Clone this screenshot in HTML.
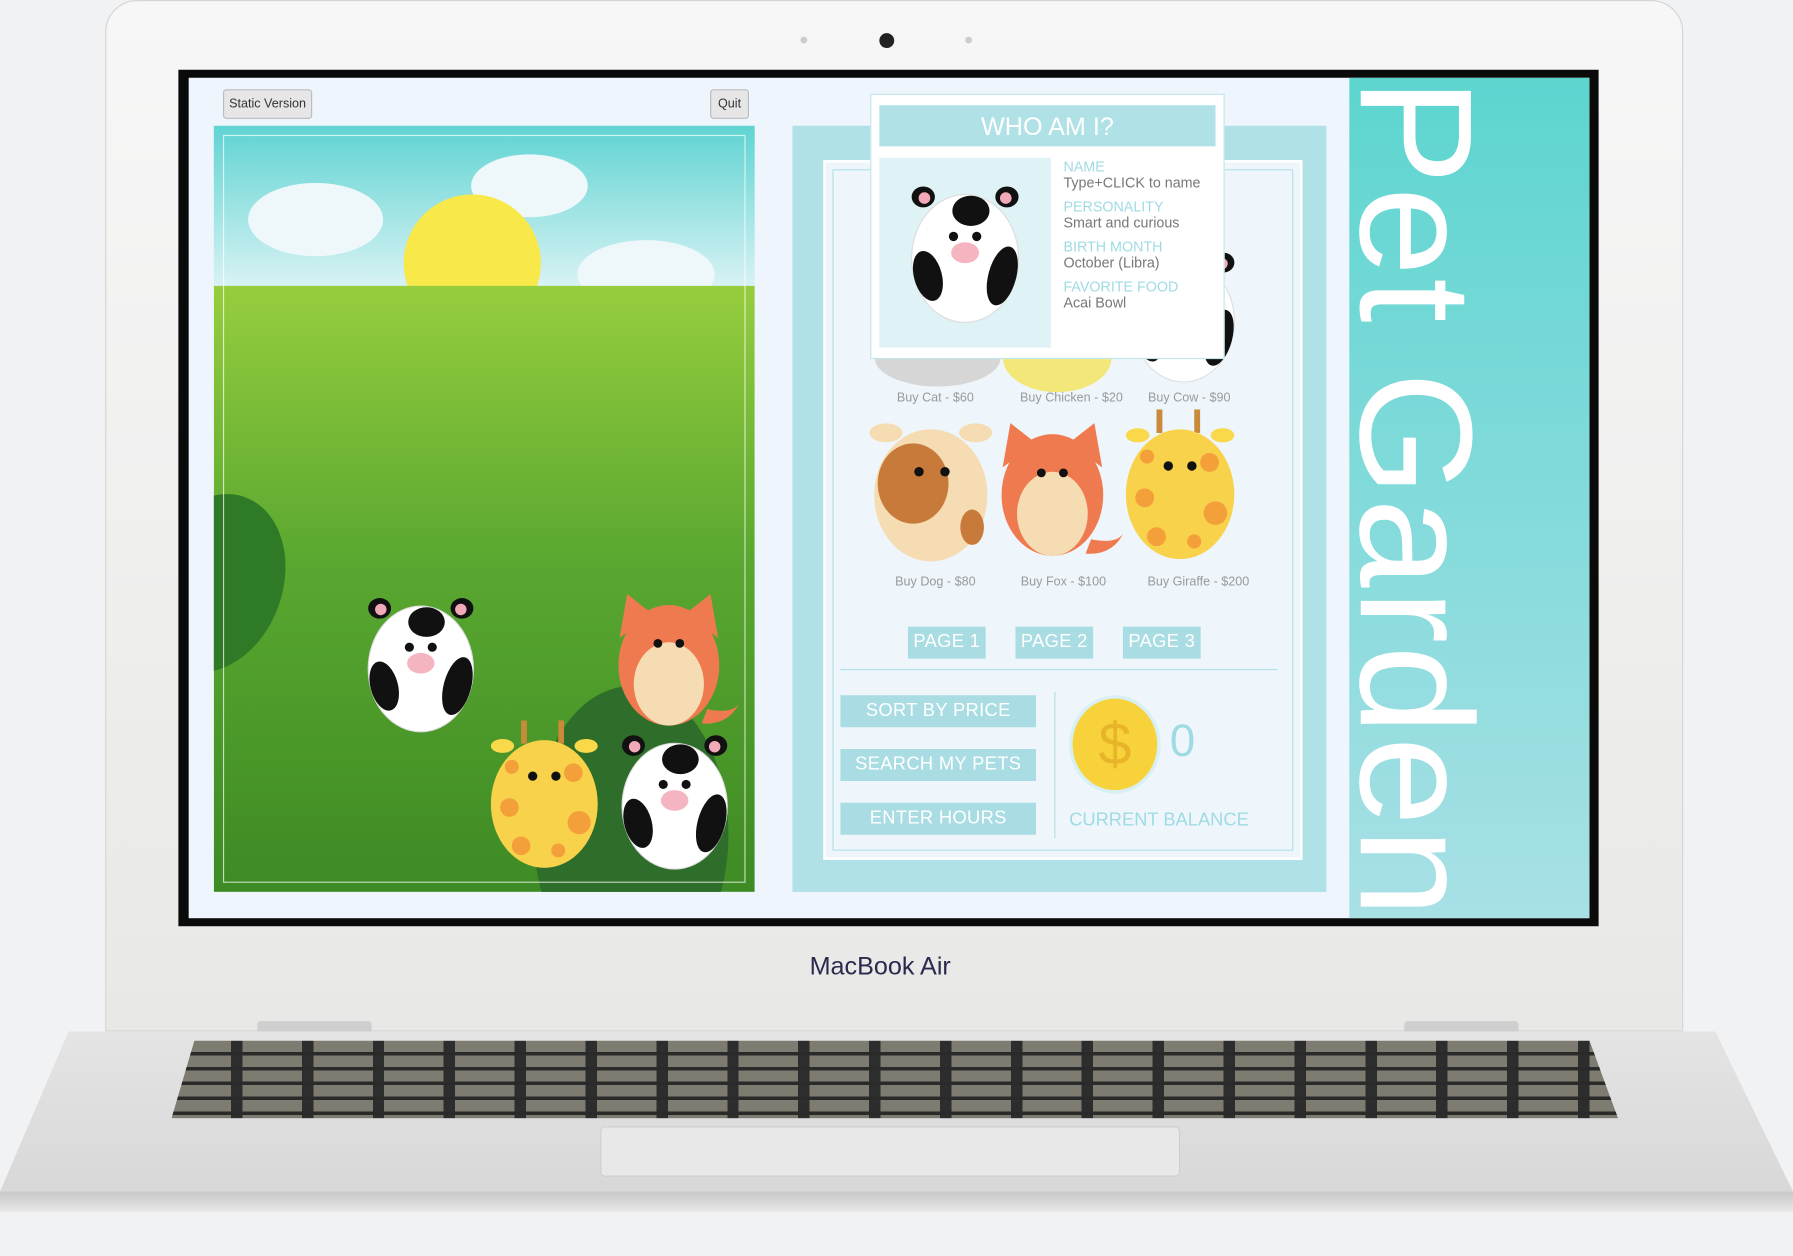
<!DOCTYPE html>
<html><head><meta charset="utf-8"><style>
html,body{margin:0;padding:0;width:1793px;height:1255px;overflow:hidden;background:#f1f2f4;}
#w{position:absolute;left:0;top:0;width:1568px;height:1098px;transform:scale(1.14349);transform-origin:0 0;font-family:"Liberation Sans",sans-serif;}
.a{position:absolute;}
.btn{position:absolute;background:#a9dde3;color:#fff;font-size:16px;text-align:center;letter-spacing:0.3px;}
.lbl{color:#9fdbe3;font-size:12.5px;}
.val{color:#777;font-size:12.5px;margin-bottom:7px;}
.cap{position:absolute;color:#999;font-size:11px;text-align:center;width:110px;}
</style></head><body><div id="w">
<svg width="0" height="0" style="position:absolute">
<defs>
<g id="cow">
<ellipse cx="14" cy="12" rx="10" ry="9" fill="#111"/><ellipse cx="15" cy="13" rx="5" ry="5" fill="#f2a9b8"/>
<ellipse cx="86" cy="12" rx="10" ry="9" fill="#111"/><ellipse cx="85" cy="13" rx="5" ry="5" fill="#f2a9b8"/>
<ellipse cx="50" cy="65" rx="46" ry="55" fill="#fff" stroke="#ddd"/>
<ellipse cx="55" cy="24" rx="16" ry="13" fill="#111"/>
<ellipse cx="18" cy="80" rx="12" ry="22" fill="#111" transform="rotate(-15 18 80)"/>
<ellipse cx="82" cy="80" rx="12" ry="26" fill="#111" transform="rotate(15 82 80)"/>
<circle cx="40" cy="46" r="4" fill="#111"/><circle cx="60" cy="46" r="4" fill="#111"/>
<ellipse cx="50" cy="60" rx="12" ry="9" fill="#f5b5c0"/>
</g>
<g id="gir">
<rect x="30" y="0" width="5" height="20" fill="#c98a3a"/><rect x="62" y="0" width="5" height="20" fill="#c98a3a"/>
<ellipse cx="14" cy="22" rx="10" ry="6" fill="#f9d84a"/><ellipse cx="86" cy="22" rx="10" ry="6" fill="#f9d84a"/>
<ellipse cx="50" cy="72" rx="46" ry="55" fill="#f8d24a"/>
<circle cx="20" cy="75" r="8" fill="#f3a03a"/><circle cx="75" cy="45" r="8" fill="#f3a03a"/><circle cx="80" cy="88" r="10" fill="#f3a03a"/><circle cx="30" cy="108" r="8" fill="#f3a03a"/><circle cx="62" cy="112" r="6" fill="#f3a03a"/><circle cx="22" cy="40" r="6" fill="#f3a03a"/>
<circle cx="40" cy="48" r="4" fill="#111"/><circle cx="60" cy="48" r="4" fill="#111"/>
</g>
<g id="fox">
<path d="M5 40 L12 0 L35 18 Z M95 40 L88 0 L65 18 Z" fill="#f07a50"/>
<ellipse cx="50" cy="65" rx="46" ry="55" fill="#f07a50"/>
<ellipse cx="50" cy="82" rx="32" ry="38" fill="#f6dcb2"/>
<circle cx="40" cy="45" r="4" fill="#111"/><circle cx="60" cy="45" r="4" fill="#111"/>
<path d="M85 105 Q110 110 115 98 Q105 120 80 118Z" fill="#f07a50"/>
</g>
<g id="dog">
<ellipse cx="12" cy="15" rx="14" ry="8" fill="#f6dcb2"/><ellipse cx="88" cy="15" rx="14" ry="8" fill="#f6dcb2"/>
<ellipse cx="50" cy="68" rx="48" ry="56" fill="#f6dcb2"/>
<ellipse cx="35" cy="58" rx="30" ry="34" fill="#c77a3a"/>
<ellipse cx="85" cy="95" rx="10" ry="15" fill="#c77a3a"/>
<circle cx="40" cy="48" r="4" fill="#111"/><circle cx="62" cy="48" r="4" fill="#111"/>
</g>
</defs></svg>

<div class="a" style="left:92px;top:0;width:1378px;height:900px;background:linear-gradient(#f7f7f7,#e8e8e6);border-radius:28px 28px 0 0;border:1px solid #d4d4d4;"></div>
<div class="a" style="left:700px;top:32px;width:6px;height:6px;border-radius:50%;background:#ccc"></div>
<div class="a" style="left:769px;top:29px;width:13px;height:13px;border-radius:50%;background:#222"></div>
<div class="a" style="left:844px;top:32px;width:6px;height:6px;border-radius:50%;background:#ccc"></div>
<div class="a" style="left:156px;top:61px;width:1242px;height:749px;background:#0a0a0a;"></div>
<div class="a" style="left:165px;top:68px;width:1225px;height:735px;background:#eef5fc;overflow:hidden;">
  <div class="a" style="left:30px;top:10px;width:76px;height:24px;background:#e6e6e6;border:1px solid #bbb;border-radius:3px;font-size:11px;line-height:24px;text-align:center;color:#333;">Static Version</div>
  <div class="a" style="left:456px;top:10px;width:32px;height:24px;background:#e6e6e6;border:1px solid #bbb;border-radius:3px;font-size:11px;line-height:24px;text-align:center;color:#333;">Quit</div>
  <div class="a" style="left:22px;top:42px;width:473px;height:670px;overflow:hidden;background:linear-gradient(#5fd4d2,#d8f2f4 140px);">
    <div class="a" style="left:30px;top:50px;width:118px;height:64px;border-radius:50%;background:#eef8fb"></div>
    <div class="a" style="left:225px;top:25px;width:102px;height:55px;border-radius:50%;background:#eef8fb"></div>
    <div class="a" style="left:318px;top:100px;width:120px;height:60px;border-radius:50%;background:#eef8fb"></div>
    <div class="a" style="left:166px;top:60px;width:120px;height:120px;border-radius:50%;background:#f9e84a"></div>
    <div class="a" style="left:0;top:140px;width:473px;height:530px;background:linear-gradient(#96cd3e,#5aa830 45%,#3e8a24);"></div>
    <div class="a" style="left:-60px;top:320px;width:120px;height:160px;border-radius:50%;background:#2f7a26;transform:rotate(20deg)"></div>
    <div class="a" style="left:280px;top:490px;width:170px;height:260px;border-radius:50%;background:#2e6e2a;"></div>
    <svg class="a" style="left:128px;top:410px" width="106" height="122" viewBox="0 0 100 122"><use href="#cow"/></svg>
    <svg class="a" style="left:350px;top:408px" width="115" height="120" viewBox="0 0 120 122"><use href="#fox"/></svg>
    <svg class="a" style="left:238px;top:520px" width="102" height="130" viewBox="0 0 100 128"><use href="#gir"/></svg>
    <svg class="a" style="left:350px;top:530px" width="106" height="122" viewBox="0 0 100 122"><use href="#cow"/></svg>
    <div class="a" style="left:8px;top:8px;right:8px;bottom:8px;border:1px solid rgba(255,255,255,.7)"></div>
  </div>
  <div class="a" style="left:528px;top:42px;width:467px;height:670px;background:#b0e1e6;"></div>
  <div class="a" style="left:555px;top:72px;width:415px;height:608px;background:#eef6fc;border:2px solid #fff;box-shadow:inset 0 0 0 6px #eef6fc, inset 0 0 0 7px #b0e1e6;"></div>
  <div class="a" style="left:600px;top:220px;width:110px;height:50px;border-radius:50%;background:#d6d6d6"></div>
  <div class="a" style="left:712px;top:215px;width:95px;height:60px;border-radius:50%;background:#f3e77a"></div>
  <svg class="a" style="left:820px;top:150px" width="100" height="118" viewBox="0 0 100 122"><use href="#cow"/></svg>
  <div class="cap" style="left:598px;top:274px">Buy Cat - $60</div>
  <div class="cap" style="left:717px;top:274px">Buy Chicken - $20</div>
  <div class="cap" style="left:820px;top:274px">Buy Cow - $90</div>
  <svg class="a" style="left:595px;top:295px" width="108" height="128" viewBox="0 0 100 124"><use href="#dog"/></svg>
  <svg class="a" style="left:707px;top:300px" width="116" height="122" viewBox="0 0 120 122"><use href="#fox"/></svg>
  <svg class="a" style="left:815px;top:290px" width="104" height="132" viewBox="0 0 100 128"><use href="#gir"/></svg>
  <div class="cap" style="left:598px;top:435px">Buy Dog - $80</div>
  <div class="cap" style="left:710px;top:435px">Buy Fox - $100</div>
  <div class="cap" style="left:828px;top:435px">Buy Giraffe - $200</div>
  <div class="btn" style="left:629px;top:480px;width:68px;height:28px;line-height:28px;">PAGE 1</div>
  <div class="btn" style="left:723px;top:480px;width:68px;height:28px;line-height:28px;">PAGE 2</div>
  <div class="btn" style="left:817px;top:480px;width:68px;height:28px;line-height:28px;">PAGE 3</div>
  <div class="a" style="left:570px;top:517px;width:382px;height:1px;background:#b0e1e6"></div>
  <div class="btn" style="left:570px;top:540px;width:171px;height:28px;line-height:28px;">SORT BY PRICE</div>
  <div class="btn" style="left:570px;top:587px;width:171px;height:28px;line-height:28px;">SEARCH MY PETS</div>
  <div class="btn" style="left:570px;top:634px;width:171px;height:28px;line-height:28px;">ENTER HOURS</div>
  <div class="a" style="left:757px;top:537px;width:1px;height:128px;background:#b0e1e6"></div>
  <div class="a" style="left:770px;top:540px;width:74px;height:80px;border-radius:50%;background:#f7d23a;border:3px solid #d8f0f3;color:#e8b52a;font-size:52px;text-align:center;line-height:80px;">$</div>
  <div class="a" style="left:858px;top:558px;color:#9fdbe3;font-size:40px;">0</div>
  <div class="a" style="left:770px;top:641px;color:#9fdbe3;font-size:16px;">CURRENT BALANCE</div>
  <div class="a" style="left:596px;top:14px;width:308px;height:230px;background:#fff;border:1px solid #bfe6ea;">
    <div class="a" style="left:7px;top:9px;width:294px;height:36px;background:#b0e1e6;color:#fff;font-size:22px;text-align:center;line-height:38px;">WHO AM I?</div>
    <div class="a" style="left:7px;top:55px;width:150px;height:166px;background:#dff3f6;">
      <svg class="a" style="left:20px;top:22px" width="110" height="124" viewBox="0 0 100 122"><use href="#cow"/></svg>
    </div>
    <div class="a" style="left:168px;top:56px;">
      <div class="lbl">NAME</div><div class="val">Type+CLICK to name</div>
      <div class="lbl">PERSONALITY</div><div class="val">Smart and curious</div>
      <div class="lbl">BIRTH MONTH</div><div class="val">October (Libra)</div>
      <div class="lbl">FAVORITE FOOD</div><div class="val">Acai Bowl</div>
    </div>
  </div>
  <div class="a" style="left:1015px;top:0;width:210px;height:735px;background:linear-gradient(#5dd5cf,#a8e0e6);"></div>
  <div class="a" style="left:1018px;top:0;width:900px;height:110px;transform-origin:0 0;transform:rotate(90deg) translate(0,-110px);color:#fff;font-size:140px;line-height:110px;white-space:nowrap;letter-spacing:2px;">Pet Garden</div>
</div>
<div class="a" style="left:708px;top:832px;color:#2a2a4e;font-size:22px;">MacBook Air</div>
<div class="a" style="left:225px;top:893px;width:100px;height:12px;background:#cfcfcf;border-radius:3px"></div>
<div class="a" style="left:1228px;top:893px;width:100px;height:12px;background:#cfcfcf;border-radius:3px"></div>
<div class="a" style="left:0;top:902px;width:1568px;height:160px;background:linear-gradient(#e4e4e4,#d6d6d6);clip-path:polygon(60px 0,1500px 0,1568px 140px,0 140px);"></div>
<div class="a" style="left:150px;top:910px;width:1265px;height:68px;background:repeating-linear-gradient(90deg,#7e7b70 0 52px,#2d2d2d 52px 62px);clip-path:polygon(20px 0,1240px 0,1265px 68px,0 68px);"></div>
<div class="a" style="left:150px;top:910px;width:1265px;height:68px;background:repeating-linear-gradient(180deg,transparent 0 10px,#2a2a2a 10px 13px);clip-path:polygon(20px 0,1240px 0,1265px 68px,0 68px);"></div>
<div class="a" style="left:525px;top:985px;width:505px;height:42px;background:#e8e8e8;border:1px solid #cfcfcf;border-radius:4px"></div>
<div class="a" style="left:0;top:1042px;width:1568px;height:18px;background:linear-gradient(#c8c8c8,#e8e8e8);"></div>
</div></body></html>
